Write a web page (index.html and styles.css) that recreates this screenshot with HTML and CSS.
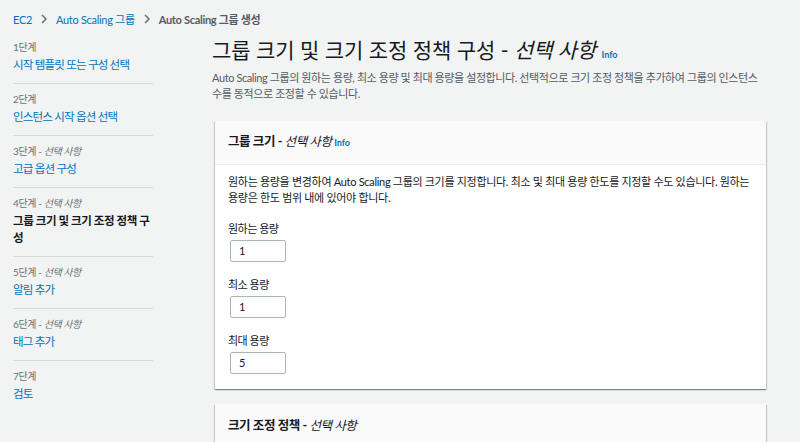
FILE: index.html
```html
<!DOCTYPE html>
<html lang="ko">
<head>
<meta charset="utf-8">
<link rel="stylesheet" href="styles.css">
</head>
<body>
<div class="page">
  <nav class="crumbs">
    <a class="crumb link">EC2</a>
    <svg class="chev" width="8" height="10" viewBox="0 0 8 10"><path d="M2 1l4 4-4 4" fill="none" stroke="#687078" stroke-width="1.5"/></svg>
    <a class="crumb link">Auto Scaling 그룹</a>
    <svg class="chev" width="8" height="10" viewBox="0 0 8 10"><path d="M2 1l4 4-4 4" fill="none" stroke="#687078" stroke-width="1.5"/></svg>
    <span class="crumb current">Auto Scaling 그룹 생성</span>
  </nav>
  <div class="layout">
    <aside class="steps">
      <div class="step">
        <div class="step-num">1단계</div>
        <div class="step-title link">시작 템플릿 또는 구성 선택</div>
      </div>
      <div class="step">
        <div class="step-num">2단계</div>
        <div class="step-title link">인스턴스 시작 옵션 선택</div>
      </div>
      <div class="step">
        <div class="step-num">3단계 - <i>선택 사항</i></div>
        <div class="step-title link">고급 옵션 구성</div>
      </div>
      <div class="step">
        <div class="step-num">4단계 - <i>선택 사항</i></div>
        <div class="step-title active">그룹 크기 및 크기 조정 정책 구성</div>
      </div>
      <div class="step">
        <div class="step-num">5단계 - <i>선택 사항</i></div>
        <div class="step-title link">알림 추가</div>
      </div>
      <div class="step">
        <div class="step-num">6단계 - <i>선택 사항</i></div>
        <div class="step-title link">태그 추가</div>
      </div>
      <div class="step last">
        <div class="step-num">7단계</div>
        <div class="step-title link">검토</div>
      </div>
    </aside>
    <main class="main">
      <h1 class="title">그룹 크기 및 크기 조정 정책 구성 - <i>선택 사항</i> <span class="info">Info</span></h1>
      <p class="desc">Auto Scaling 그룹의 원하는 용량, 최소 용량 및 최대 용량을 설정합니다. 선택적으로 크기 조정 정책을 추가하여 그룹의 인스턴스 수를 동적으로 조정할 수 있습니다.</p>
      <section class="card">
        <div class="card-head">
          <h2 class="card-title">그룹 크기 - <i>선택 사항</i> <span class="info">Info</span></h2>
        </div>
        <div class="card-body">
          <p class="body-text">원하는 용량을 변경하여 Auto Scaling 그룹의 크기를 지정합니다. 최소 및 최대 용량 한도를 지정할 수도 있습니다. 원하는 용량은 한도 범위 내에 있어야 합니다.</p>
          <div class="field">
            <label class="label">원하는 용량</label>
            <div class="input">1</div>
          </div>
          <div class="field">
            <label class="label">최소 용량</label>
            <div class="input">1</div>
          </div>
          <div class="field">
            <label class="label">최대 용량</label>
            <div class="input">5</div>
          </div>
        </div>
      </section>
      <section class="card">
        <div class="card-head">
          <h2 class="card-title">크기 조정 정책 - <i>선택 사항</i></h2>
        </div>
      </section>
    </main>
  </div>
</div>
</body>
</html>
```

FILE: styles.css
```css
* { box-sizing: border-box; }
html, body { margin: 0; padding: 0; }
body {
  background: #f2f3f3;
  font-family: "Lato", "Noto Sans CJK KR", sans-serif;
  color: #16191f;
  width: 800px;
  height: 442px;
  overflow: hidden;
}
.page { padding: 10px 0 0 13px; }
.link { color: #0073bb; }
.crumbs {
  display: flex;
  align-items: center;
  gap: 8px;
  font-size: 11px;
  height: 18px;
  letter-spacing: -0.3px;
}
.crumb.current { color: #545b64; font-weight: 700; }
.chev { display: block; }
.layout {
  display: flex;
  margin-top: 10px;
}
.steps {
  width: 140px;
  flex: none;
}
.step {
  padding: 8px 0 10px;
  border-bottom: 1px solid #d5dbdb;
}
.step:first-child { padding-top: 2px; }
.step.last { border-bottom: none; }
.step-num {
  font-size: 10px;
  color: #687078;
  line-height: 14px;
  letter-spacing: -0.4px;
}
.step-title {
  font-size: 11.5px;
  line-height: 17px;
  margin-top: 2px;
  letter-spacing: -0.8px;
}
.step-title.active { color: #16191f; font-weight: 700; letter-spacing: -0.4px; }
.main {
  margin-left: 59px;
  width: 555px;
}
.title {
  font-size: 21px;
  font-weight: 400;
  margin: 0;
  line-height: 24px;
  color: #16191f;
}
.info {
  font-size: 9px;
  font-weight: 700;
  color: #0073bb;
  font-style: normal;
  letter-spacing: 0;
}
.desc {
  margin: 3px 0 0;
  font-size: 11px;
  line-height: 16px;
  color: #545b64;
  letter-spacing: -0.4px;
}
.card {
  margin: 19px 0 0 3px;
  width: 551px;
  background: #fff;
  box-shadow: 0 1px 1px 0 rgba(0,28,36,.3), 1px 1px 1px 0 rgba(0,28,36,.15), -1px 1px 1px 0 rgba(0,28,36,.15);
}
.card + .card { margin-top: 15px; }
.card-head {
  background: #fafafa;
  border-bottom: 1px solid #eaeded;
  height: 44px;
  padding: 0 13px;
  display: flex;
  align-items: center;
}
.card-title {
  margin: 0;
  font-size: 12.5px;
  font-weight: 700;
  line-height: 20px;
  letter-spacing: -0.4px;
}
.card-title i { font-weight: 400; }
.card-body {
  padding: 9px 13px 15px;
}
.body-text {
  margin: 0;
  font-size: 11px;
  line-height: 16px;
  color: #16191f;
  letter-spacing: -0.3px;
}
.field { margin-top: 15px; }
.label {
  display: block;
  font-size: 11px;
  line-height: 16px;
  height: 16px;
  color: #16191f;
  letter-spacing: -0.5px;
}
.input {
  margin: 3px 0 0 2px;
  width: 56px;
  height: 22px;
  border: 1px solid #aab7b8;
  border-radius: 2px;
  font-size: 11px;
  line-height: 20px;
  padding-left: 8px;
  color: #16191f;
}
```
